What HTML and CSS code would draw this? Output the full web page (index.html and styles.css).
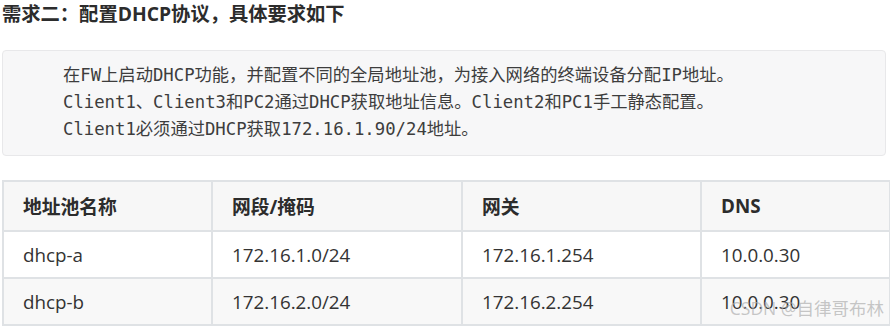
FILE: index.html
```html
<!DOCTYPE html>
<html lang="zh-CN">
<head>
<meta charset="utf-8">
<link rel="stylesheet" href="styles.css">
</head>
<body>
<div class="page">
  <h3 class="title">需求二：配置DHCP协议，具体要求如下</h3>
  <div class="quote">
    <p>在FW上启动DHCP功能，并配置不同的全局地址池，为接入网络的终端设备分配IP地址。</p>
    <p>Client1、Client3和PC2通过DHCP获取地址信息。Client2和PC1手工静态配置。</p>
    <p>Client1必须通过DHCP获取172.16.1.90/24地址。</p>
  </div>
  <table class="pools">
    <colgroup>
      <col class="c1"><col class="c2"><col class="c3"><col class="c4">
    </colgroup>
    <thead>
      <tr><th>地址池名称</th><th>网段/掩码</th><th>网关</th><th>DNS</th></tr>
    </thead>
    <tbody>
      <tr><td>dhcp-a</td><td>172.16.1.0/24</td><td>172.16.1.254</td><td>10.0.0.30</td></tr>
      <tr><td>dhcp-b</td><td>172.16.2.0/24</td><td>172.16.2.254</td><td>10.0.0.30</td></tr>
    </tbody>
  </table>
</div>
<div class="watermark">CSDN @自律哥布林</div>
</body>
</html>
```
FILE: styles.css
```css
html, body {
  margin: 0;
  padding: 0;
  background: #ffffff;
}
body {
  font-family: "Open Sans", "Noto Sans CJK SC", sans-serif;
  color: #333333;
  overflow: hidden;
}
.page {
  padding: 0 2px;
}
.title {
  margin: 0;
  padding-top: 2px;
  font-size: 19.3px;
  line-height: 24px;
  font-weight: 700;
  color: #2c2c2c;
}
.quote {
  margin-top: 24px;
  background: #f7f7f8;
  border: 1px solid #e8e8ea;
  border-radius: 4px;
  padding: 11px 20px 12px 60px;
  width: 884px;
  box-sizing: border-box;
}
.quote p {
  margin: 0;
  font-family: "DejaVu Sans Mono", "Noto Sans CJK SC", monospace;
  font-size: 17.3px;
  line-height: 27px;
  color: #3d3d3d;
}
.pools {
  margin-top: 24px;
  border-collapse: collapse;
  width: 887px;
  table-layout: fixed;
  font-size: 18.8px;
}
.c1 { width: 209px; }
.c2 { width: 250px; }
.c3 { width: 239px; }
.c4 { width: 189px; }
.pools th, .pools td {
  border: 2px solid #dfe2e5;
  text-align: left;
  padding: 0 19px;
}
.pools th {
  height: 48px;
  background: #f7f7f7;
  font-weight: 700;
  color: #2c2c2c;
}
.pools td {
  height: 45px;
  color: #333333;
}
.pools tbody tr:nth-child(2) td {
  background: #f8f8f8;
}
.watermark {
  position: absolute;
  right: 6px;
  bottom: 7px;
  font-family: "Open Sans", "Noto Sans CJK SC", sans-serif;
  font-size: 17.5px;
  color: rgba(175, 175, 175, 0.7);
}
```
